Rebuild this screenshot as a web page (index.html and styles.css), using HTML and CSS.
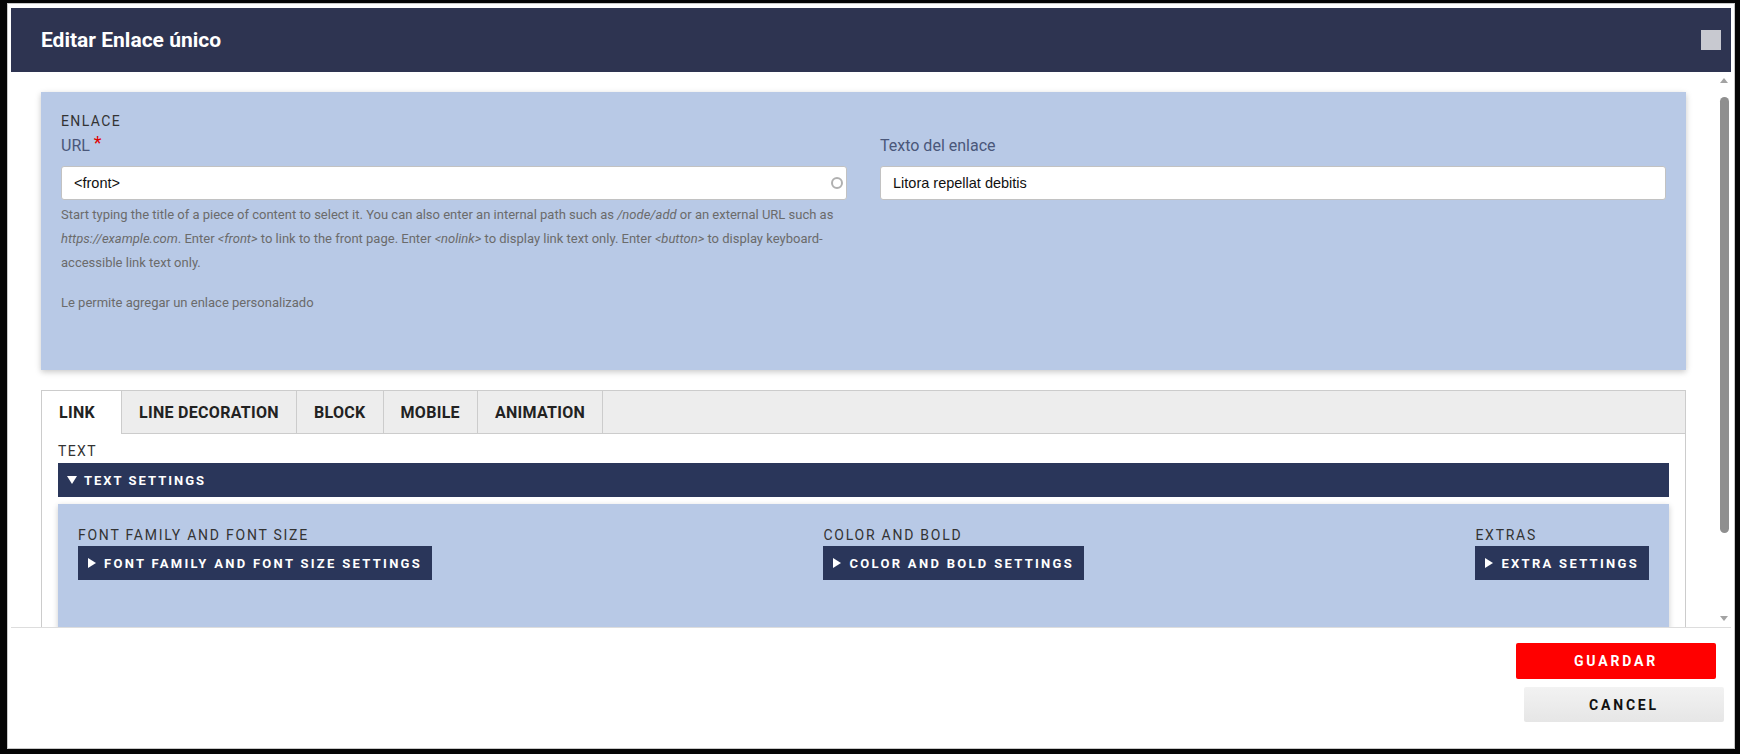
FILE: index.html
```html
<!DOCTYPE html>
<html lang="es">
<head>
    <meta charset="UTF-8">
    <meta name="viewport" content="width=device-width, initial-scale=1.0">
    <title>Editar Enlace único</title>
    <link rel="stylesheet" href="styles.css">
</head>
<body>
<div class="dialog">
    <div class="titlebar">
        <span class="title">Editar Enlace único</span>
        <span class="close-btn"></span>
    </div>

    <div class="dialog-body">
        <div class="content">
            <fieldset class="panel">
                <div class="legend">ENLACE</div>
                <div class="row">
                    <div class="field">
                        <label class="field-label">URL <span class="required">*</span></label>
                        <div class="input-wrap">
                            <input type="text" class="text-input" value="&lt;front&gt;">
                            <span class="throbber"></span>
                        </div>
                        <div class="description">
                            Start typing the title of a piece of content to select it. You can also enter an internal path such as <em>/node/add</em> or an external URL such as <em>https://example.com</em>. Enter <em>&lt;front&gt;</em> to link to the front page. Enter <em>&lt;nolink&gt;</em> to display link text only. Enter <em>&lt;button&gt;</em> to display keyboard-accessible link text only.
                        </div>
                        <div class="description help">Le permite agregar un enlace personalizado</div>
                    </div>
                    <div class="field">
                        <label class="field-label">Texto del enlace</label>
                        <div class="input-wrap">
                            <input type="text" class="text-input" value="Litora repellat debitis">
                        </div>
                    </div>
                </div>
            </fieldset>

            <div class="tabs">
                <ul class="tab-list">
                    <li class="tab active">LINK</li>
                    <li class="tab">LINE DECORATION</li>
                    <li class="tab">BLOCK</li>
                    <li class="tab">MOBILE</li>
                    <li class="tab">ANIMATION</li>
                </ul>
                <div class="tab-pane">
                    <div class="legend">TEXT</div>
                    <div class="details-bar"><span class="tri-down"></span>TEXT SETTINGS</div>
                    <div class="sub-panel">
                        <div class="sub-col">
                            <div class="legend wide">FONT FAMILY AND FONT SIZE</div>
                            <div class="summary-btn"><span class="tri-right"></span>FONT FAMILY AND FONT SIZE SETTINGS</div>
                        </div>
                        <div class="sub-col">
                            <div class="legend wide">COLOR AND BOLD</div>
                            <div class="summary-btn"><span class="tri-right"></span>COLOR AND BOLD SETTINGS</div>
                        </div>
                        <div class="sub-col">
                            <div class="legend wide">EXTRAS</div>
                            <div class="summary-btn"><span class="tri-right"></span>EXTRA SETTINGS</div>
                        </div>
                    </div>
                </div>
            </div>
        </div>

        <div class="scrollbar">
            <span class="arrow-up"></span>
            <span class="thumb"></span>
            <span class="arrow-down"></span>
        </div>
    </div>

    <div class="footer">
        <button class="btn save">GUARDAR</button>
        <button class="btn cancel">CANCEL</button>
    </div>
</div>
</body>
</html>
```

FILE: styles.css
```css
body {
    margin: 0;
    height: 754px;
    overflow: hidden;
    background-color: #050505;
    font-family: Roboto, "Noto Sans", sans-serif;
    color: #222;
}

.dialog {
    margin: 3px 0 0 7px;
    width: 1728px;
    height: 746px;
    box-sizing: border-box;
    border: 1px solid #c8c8c8;
    padding: 4px 3px 3px;
    background-color: #fff;
    display: flex;
    flex-direction: column;
}

.titlebar {
    height: 64px;
    flex-shrink: 0;
    background-color: #2e3451;
    display: flex;
    align-items: center;
    justify-content: space-between;
    padding: 0 10px 0 30px;
}
.title {
    color: #fff;
    font-size: 21px;
    font-weight: bold;
}
.close-btn {
    width: 20px;
    height: 20px;
    background-color: #c8c9d0;
}

.dialog-body {
    height: 555px;
    flex-shrink: 0;
    display: flex;
}
.content {
    flex: 1;
    overflow: hidden;
    padding: 20px 31px 0 30px;
}

/* fake scrollbar, the page is cut where the footer starts */
.scrollbar {
    width: 14px;
    display: flex;
    flex-direction: column;
    align-items: center;
    padding: 6px 0;
    box-sizing: border-box;
}
.arrow-up, .arrow-down {
    width: 0;
    height: 0;
    border-left: 4px solid transparent;
    border-right: 4px solid transparent;
}
.arrow-up { border-bottom: 5px solid #a3a3a3; }
.arrow-down { border-top: 5px solid #a3a3a3; margin-top: auto; }
.thumb {
    width: 9px;
    height: 436px;
    margin-top: 14px;
    border-radius: 5px;
    background-color: #8f8f8f;
}

.panel {
    margin: 0;
    border: none;
    background-color: #b8c9e6;
    padding: 20px 20px 55px;
    box-shadow: 0 2px 6px rgba(0, 0, 0, 0.22);
}
.legend {
    font-size: 14px;
    line-height: 18px;
    letter-spacing: 1.4px;
    color: #333;
}
.legend.wide {
    letter-spacing: 1.75px;
}
.row {
    display: grid;
    grid-template-columns: 1fr 1fr;
    column-gap: 33px;
    margin-top: 6px;
}
.field-label {
    display: block;
    font-size: 16px;
    line-height: 20px;
    color: #4a577a;
    margin-bottom: 10px;
}
.required {
    color: #e00000;
    font-size: 18px;
    vertical-align: top;
    line-height: 14px;
}
.input-wrap {
    position: relative;
}
.text-input {
    width: 100%;
    height: 34px;
    box-sizing: border-box;
    border: 1px solid #c2c2c2;
    border-radius: 3px;
    padding: 0 12px;
    font-family: "Liberation Sans", Arial, sans-serif;
    font-size: 14.5px;
    color: #111;
    background-color: #fff;
}
.throbber {
    position: absolute;
    right: 4px;
    top: 11px;
    width: 8px;
    height: 8px;
    border: 2px solid #b0b0b0;
    border-radius: 50%;
}
.description {
    margin-top: 3px;
    font-size: 13px;
    line-height: 24px;
    color: #6b6b6b;
}
.description.help {
    margin-top: 16px;
}

.tabs {
    margin-top: 20px;
}
.tab-list {
    list-style: none;
    margin: 0;
    padding: 0;
    display: flex;
    height: 44px;
    box-sizing: border-box;
    border: 1px solid #ccc;
    background-color: #ededed;
}
.tab {
    display: flex;
    align-items: center;
    padding: 0 17px;
    border-right: 1px solid #ccc;
    font-size: 16px;
    font-weight: bold;
    letter-spacing: 0.3px;
    color: #222;
}
.tab.active {
    background-color: #fff;
    padding-right: 26px;
    margin-bottom: -1px;
}
.tab-pane {
    border: 1px solid #ccc;
    border-top: none;
    padding: 8px 16px 40px;
}
.details-bar {
    margin-top: 3px;
    height: 34px;
    display: flex;
    align-items: center;
    padding: 0 9px;
    background-color: #2a365a;
    color: #fff;
    font-size: 13px;
    font-weight: bold;
    letter-spacing: 2px;
}
.tri-down {
    width: 0;
    height: 0;
    border-left: 5px solid transparent;
    border-right: 5px solid transparent;
    border-top: 8px solid #fff;
    margin-right: 7px;
}
.tri-right {
    width: 0;
    height: 0;
    border-top: 5px solid transparent;
    border-bottom: 5px solid transparent;
    border-left: 8px solid #fff;
    margin-right: 8px;
}
.sub-panel {
    margin-top: 7px;
    background-color: #b8c9e6;
    padding: 22px 20px 50px;
    display: flex;
    justify-content: space-between;
    box-shadow: 0 2px 6px rgba(0, 0, 0, 0.2);
}
.summary-btn {
    margin-top: 2px;
    height: 34px;
    display: flex;
    align-items: center;
    padding: 0 10px;
    background-color: #2a365a;
    color: #fff;
    font-size: 13px;
    font-weight: bold;
    letter-spacing: 2.3px;
}

.footer {
    flex: 1;
    border-top: 1px solid #ddd;
    display: flex;
    flex-direction: column;
    align-items: flex-end;
    padding: 15px 7px 0 0;
}
.btn {
    width: 200px;
    border: none;
    border-radius: 2px;
    font-family: Roboto, sans-serif;
    font-size: 14px;
    font-weight: bold;
    letter-spacing: 2.8px;
    cursor: pointer;
}
.btn.save {
    height: 36px;
    margin-right: 8px;
    background-color: #ff0000;
    color: #fff;
}
.btn.cancel {
    height: 35px;
    margin-top: 8px;
    background: linear-gradient(#f2f2f2, #e6e6e6);
    color: #111;
}
```
